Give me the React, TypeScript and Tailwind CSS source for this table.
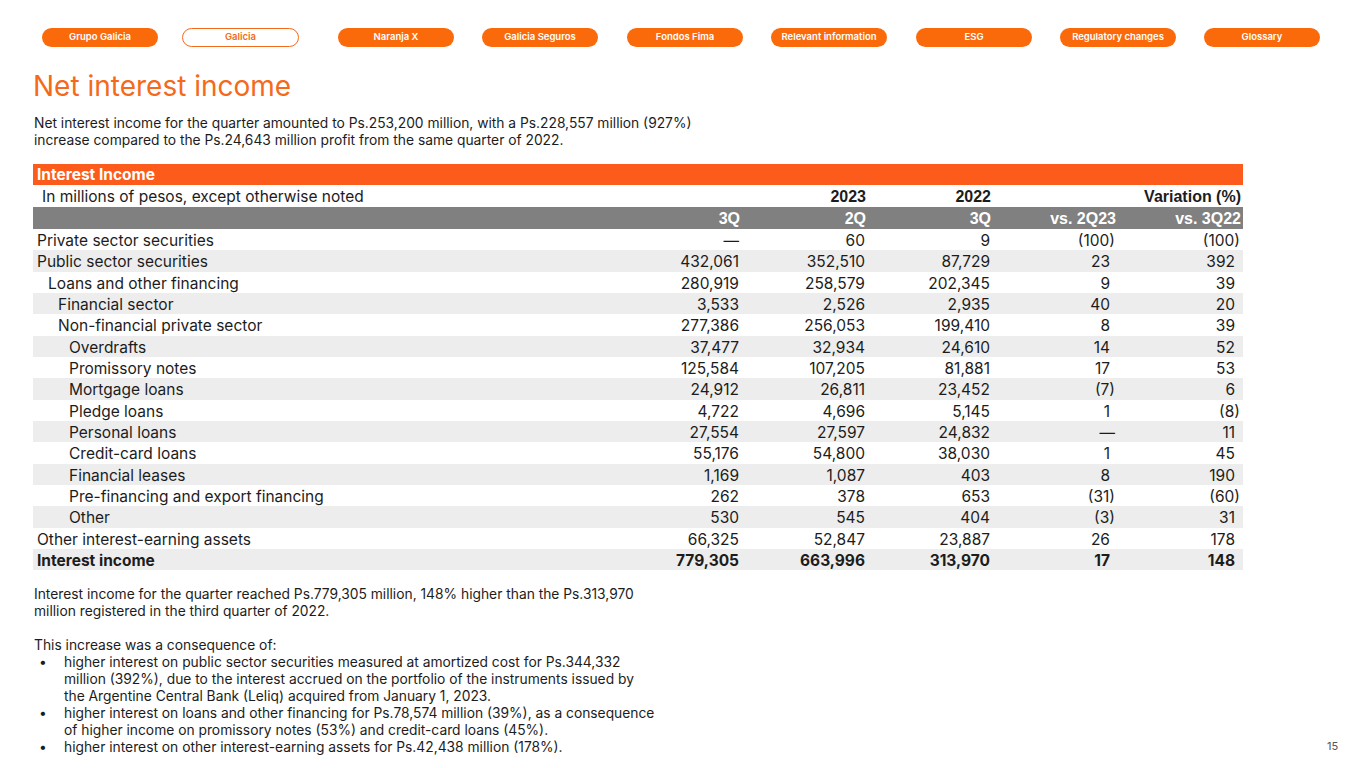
import React from "react";

const navItems: { n: string; ml: string }[] = [
  { n: "Grupo Galicia", ml: "ml-[42px]" },
  { n: "Galicia", ml: "ml-[24px]" },
  { n: "Naranja X", ml: "ml-[39px]" },
  { n: "Galicia Seguros", ml: "ml-[28px]" },
  { n: "Fondos Fima", ml: "ml-[29px]" },
  { n: "Relevant information", ml: "ml-[28px]" },
  { n: "ESG", ml: "ml-[29px]" },
  { n: "Regulatory changes", ml: "ml-[28px]" },
  { n: "Glossary", ml: "ml-[28px]" },
];

type Row = { label: string; level: number; v: string[]; bold?: boolean };

const rows: Row[] = [
  { label: "Private sector securities", level: 0, v: ["—", "60", "9", "(100)", "(100)"] },
  { label: "Public sector securities", level: 0, v: ["432,061", "352,510", "87,729", "23", "392"] },
  { label: "Loans and other financing", level: 1, v: ["280,919", "258,579", "202,345", "9", "39"] },
  { label: "Financial sector", level: 2, v: ["3,533", "2,526", "2,935", "40", "20"] },
  { label: "Non-financial private sector", level: 2, v: ["277,386", "256,053", "199,410", "8", "39"] },
  { label: "Overdrafts", level: 3, v: ["37,477", "32,934", "24,610", "14", "52"] },
  { label: "Promissory notes", level: 3, v: ["125,584", "107,205", "81,881", "17", "53"] },
  { label: "Mortgage loans", level: 3, v: ["24,912", "26,811", "23,452", "(7)", "6"] },
  { label: "Pledge loans", level: 3, v: ["4,722", "4,696", "5,145", "1", "(8)"] },
  { label: "Personal loans", level: 3, v: ["27,554", "27,597", "24,832", "—", "11"] },
  { label: "Credit-card loans", level: 3, v: ["55,176", "54,800", "38,030", "1", "45"] },
  { label: "Financial leases", level: 3, v: ["1,169", "1,087", "403", "8", "190"] },
  { label: "Pre-financing and export financing", level: 3, v: ["262", "378", "653", "(31)", "(60)"] },
  { label: "Other", level: 3, v: ["530", "545", "404", "(3)", "31"] },
  { label: "Other interest-earning assets", level: 0, v: ["66,325", "52,847", "23,887", "26", "178"] },
  { label: "Interest income", level: 0, v: ["779,305", "663,996", "313,970", "17", "148"], bold: true },
];

const indent = ["pl-[4px]", "pl-[15px]", "pl-[25px]", "pl-[36px]"];

const grid = "grid grid-cols-[584px_125px_126px_125px_125px_125px]";
const arial = { fontFamily: "'Liberation Sans', Arial, sans-serif" };

export default function App() {
  return (
    <div
      className="relative w-[1365px] h-[768px] bg-white text-[#1c1c1c] overflow-hidden"
      style={{ fontFamily: "Inter, 'Noto Sans', sans-serif" }}
    >
      {/* Nav */}
      <div className="flex pt-[28px]">
        {navItems.map(({ n, ml }) =>
          n === "Galicia" ? (
            <div
              key={n}
              className={`${ml} w-[117px] h-[19px] rounded-full border border-[#f26a1c] bg-white text-[#f26a1c] text-[9.5px] font-semibold flex items-center justify-center`}
            >
              {n}
            </div>
          ) : (
            <div
              key={n}
              className={`${ml} w-[116px] h-[19px] rounded-full bg-[#fa6a0a] text-white text-[9.5px] font-semibold flex items-center justify-center`}
            >
              {n}
            </div>
          )
        )}
      </div>

      {/* Title */}
      <h1 className="ml-[33px] mt-[22px] text-[28px] leading-[34px] text-[#f46a1a] font-normal">
        Net interest income
      </h1>

      <p className="ml-[34px] mt-[12px] text-[13.8px] leading-[17px] w-[700px]">
        Net interest income for the quarter amounted to Ps.253,200 million, with a Ps.228,557 million (927%)
        <br />
        increase compared to the Ps.24,643 million profit from the same quarter of 2022.
      </p>

      {/* Table */}
      <div className="ml-[33px] mt-[15px] w-[1210px] text-[15.5px]">
        <div className="h-[21px] bg-[#fd5b1b] text-white font-bold flex items-center pl-[4px]">
          Interest Income
        </div>
        <div className={`${grid} h-[22px] items-center`}>
          <div className="pl-[9px]">In millions of pesos, except otherwise noted</div>
          <div />
          <div className="text-right pr-[2px] font-bold text-[16px]" style={arial}>
            2023
          </div>
          <div className="text-right pr-[2px] font-bold text-[16px]" style={arial}>
            2022
          </div>
          <div />
          <div className="text-right pr-[2px] font-bold text-[16px]" style={arial}>
            Variation (%)
          </div>
        </div>
        <div
          className={`${grid} h-[22px] items-center bg-[#808080] text-white font-bold text-[16px]`}
          style={arial}
        >
          <div />
          <div className="text-right pr-[2px]">3Q</div>
          <div className="text-right pr-[2px]">2Q</div>
          <div className="text-right pr-[2px]">3Q</div>
          <div className="text-right pr-[2px]">vs. 2Q23</div>
          <div className="text-right pr-[2px]">vs. 3Q22</div>
        </div>
        {rows.map((r, i) => (
          <div
            key={r.label}
            className={`${grid} h-[21.33px] items-center ${i % 2 === 1 ? "bg-[#ededed]" : "bg-white"} ${
              r.bold ? "font-bold" : ""
            }`}
          >
            <div className={indent[r.level]}>{r.label}</div>
            {r.v.map((v, j) => {
              const paren = v.startsWith("(");
              const pad = j >= 3 && !paren && v !== "—" ? "pr-[8px]" : "pr-[3px]";
              return (
                <div key={j} className={`text-right ${pad}`}>
                  {v}
                </div>
              );
            })}
          </div>
        ))}
      </div>

      {/* Bottom text */}
      <div className="ml-[34px] mt-[16px] text-[13.8px] leading-[17px] w-[660px]">
        <p>
          Interest income for the quarter reached Ps.779,305 million, 148% higher than the Ps.313,970
          <br />
          million registered in the third quarter of 2022.
        </p>
        <p className="mt-[17px]">This increase was a consequence of:</p>
        <ul className="list-none">
          <li className="flex">
            <span className="w-[30px] pl-[5px]">•</span>
            <span>
              higher interest on public sector securities measured at amortized cost for Ps.344,332
              <br />
              million (392%), due to the interest accrued on the portfolio of the instruments issued by
              <br />
              the Argentine Central Bank (Leliq) acquired from January 1, 2023.
            </span>
          </li>
          <li className="flex">
            <span className="w-[30px] pl-[5px]">•</span>
            <span>
              higher interest on loans and other financing for Ps.78,574 million (39%), as a consequence
              <br />
              of higher income on promissory notes (53%) and credit-card loans (45%).
            </span>
          </li>
          <li className="flex">
            <span className="w-[30px] pl-[5px]">•</span>
            <span>higher interest on other interest-earning assets for Ps.42,438 million (178%).</span>
          </li>
        </ul>
      </div>

      <div className="absolute left-[1327px] top-[738px] text-[11px] text-[#555]">15</div>
    </div>
  );
}
